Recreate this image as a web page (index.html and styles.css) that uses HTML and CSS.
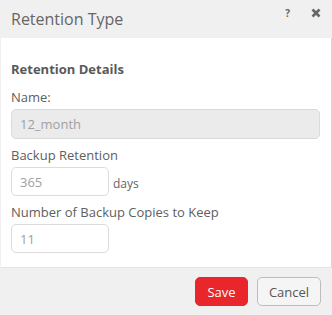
FILE: index.html
```html
<!DOCTYPE html>
<html>
<head>
<meta charset="utf-8">
<link rel="stylesheet" href="styles.css">
</head>
<body>
<div class="dialog">
  <div class="header">
    <div class="title">Retention Type</div>
    <div class="tools">
      <span class="help">?</span>
      <svg class="close" width="10" height="10" viewBox="0 0 10 10"><path d="M1.5 1.5 L8.5 8.5 M8.5 1.5 L1.5 8.5" stroke="#666" stroke-width="2.6" stroke-linecap="butt"/></svg>
    </div>
  </div>
  <div class="content">
    <div class="section">Retention Details</div>
    <div class="label">Name:</div>
    <div class="input disabled wide">12_month</div>
    <div class="label">Backup Retention</div>
    <div class="row">
      <div class="input short">365</div>
      <span class="unit">days</span>
    </div>
    <div class="label">Number of Backup Copies to Keep</div>
    <div class="input short">11</div>
  </div>
  <div class="footer">
    <button class="btn save">Save</button>
    <button class="btn cancel">Cancel</button>
  </div>
</div>
</body>
</html>
```
FILE: styles.css
```css
html, body {
  margin: 0;
  padding: 0;
  background: #f0f0f0;
}
body {
  font-family: "Open Sans", "Liberation Sans", sans-serif;
  color: #555;
  width: 332px;
  height: 315px;
  overflow: hidden;
}
.dialog {
  display: flex;
  flex-direction: column;
  height: 315px;
}
.header {
  height: 38px;
  display: flex;
  align-items: flex-start;
  justify-content: space-between;
  padding: 0 11px;
  box-sizing: border-box;
}
.title {
  font-size: 16px;
  color: #666;
  margin-top: 8px;
  line-height: 22px;
}
.tools {
  display: flex;
  align-items: center;
  margin-top: 7px;
}
.help {
  font-size: 10px;
  font-weight: 700;
  color: #666;
  line-height: 12px;
  margin-right: 21px;
}
.close {
  display: block;
}
.content {
  background: #fff;
  border-right: 1px solid #d8d8d8;
  border-bottom: 1px solid #e4e4e4;
  margin-left: 1px;
  height: 230px;
  box-sizing: border-box;
  padding: 22px 11px 0 10px;
  display: flex;
  flex-direction: column;
  align-items: flex-start;
}
.section {
  font-size: 13px;
  font-weight: 700;
  color: #595959;
  line-height: 18px;
  margin-bottom: 10px;
}
.label {
  font-size: 13px;
  color: #606060;
  line-height: 18px;
  margin-bottom: 3px;
}
.input {
  box-sizing: border-box;
  height: 30px;
  border: 1px solid #dcdcdc;
  border-radius: 5px;
  font-size: 13px;
  color: #a0a0a0;
  padding: 0 8px;
  display: flex;
  align-items: center;
  background: #fff;
}
.input.disabled {
  background: #ebebeb;
  border-color: #dadada;
}
.input.wide {
  width: 100%;
  margin-bottom: 7px;
}
.input.short {
  width: 98px;
  height: 29px;
}
.row {
  display: flex;
  align-items: center;
  margin-bottom: 7px;
}
.unit {
  font-size: 12px;
  color: #666;
  margin-left: 4px;
  margin-top: 3px;
}
.footer {
  flex: 1;
  display: flex;
  justify-content: flex-end;
  align-items: flex-start;
  padding: 9px 11px 0 0;
  gap: 9px;
}
.btn {
  font-family: "Open Sans", "Liberation Sans", sans-serif;
  font-size: 13px;
  height: 29px;
  border-radius: 5px;
  padding: 0;
  cursor: pointer;
}
.save {
  width: 53px;
  background: #e8262c;
  border: 1px solid #e8262c;
  color: #fff;
}
.cancel {
  width: 64px;
  background: #f5f5f5;
  border: 1px solid #bdbdbd;
  color: #555;
}
```
